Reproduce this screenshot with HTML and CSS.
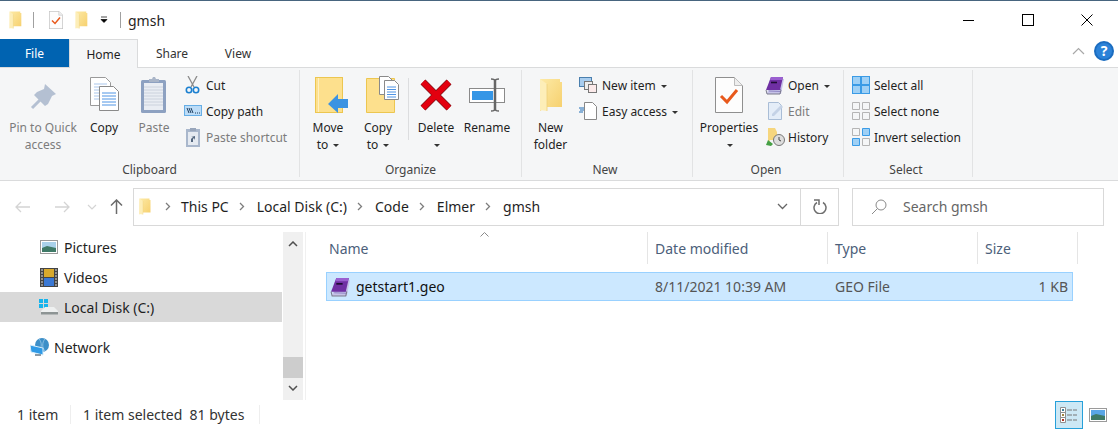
FILE: index.html
```html
<!DOCTYPE html>
<html lang="en">
<head>
  <meta charset="UTF-8" />
  <title>gmsh</title>
  <link rel="stylesheet" href="styles.css">
</head>
<body>
  <svg class="defs" width="0" height="0">
    <defs>
      <linearGradient id="folder-fill" x1="0" y1="0" x2="1" y2="1">
        <stop offset="0" stop-color="#fdeaa6"/>
        <stop offset="1" stop-color="#f6cf6c"/>
      </linearGradient>
      <symbol id="folder" viewBox="0 0 24 34">
        <path d="M1 1h20v3h2v25H8L1 33z" fill="url(#folder-fill)"/>
        <path d="M1 1l7 5v27l-7-1z" fill="#fdeeb8"/>
        <path d="M8 6v27" stroke="#efcf78" stroke-width=".8"/>
      </symbol>
      <symbol id="notepad" viewBox="0 0 20 19">
        <path d="M5 3h14l-3 15H2z" fill="#c6c2e8"/>
        <path d="M4 13l12 .5M4 15l12 .5" stroke="#8f86c4"/>
        <path d="M6 1h12l-3 13H1z" fill="#6f2fa3"/>
        <path d="M6 1h12l-1 3H5z" fill="#9a5fd0"/>
        <path d="M6 6.500h6" stroke="#1d0b33" stroke-width="1.600"/>
        <path d="M1 14l1 4h13l1-4" fill="none" stroke="#7a7a8c"/>
      </symbol>
      <symbol id="check-doc" viewBox="0 0 28 36">
        <path d="M.5.5h19l8 8v27H.5z" fill="#fdfdfd" stroke="#8f8f8f"/>
        <path d="M19.500.5v8h8" fill="#eee" stroke="#bdbdbd"/>
        <path d="M6 19l6 6 10-12" fill="none" stroke="#e8591c" stroke-width="3"/>
      </symbol>
    </defs>
  </svg>

  <div class="top-line"></div>

  <header class="titlebar">
    <svg class="qa-folder" width="13" height="18"><use href="#folder"/></svg>
    <span class="qa-sep"></span>
    <svg class="qa-props" width="14" height="18"><use href="#check-doc"/></svg>
    <svg class="qa-folder2" width="13" height="18"><use href="#folder"/></svg>
    <svg class="qa-drop" width="8" height="8"><path d="M1 1h6M1 3.500h6l-3 3z" fill="#000" stroke="#000" stroke-width=".7"/></svg>
    <span class="qa-sep qa-sep2"></span>
    <span class="title-text">gmsh</span>
    <div class="win-buttons">
      <svg width="12" height="12"><path d="M0 6.500h11" stroke="#000"/></svg>
      <svg width="12" height="12"><rect x=".5" y=".5" width="11" height="11" fill="none" stroke="#000"/></svg>
      <svg width="12" height="12"><path d="M.5.500l11 11M11.500.500l-11 11" stroke="#000"/></svg>
    </div>
  </header>

  <nav class="tabs">
    <span class="tab tab-file">File</span>
    <span class="tab tab-home">Home</span>
    <span class="tab tab-share">Share</span>
    <span class="tab tab-view">View</span>
    <div class="tabs-right">
      <svg width="13" height="8"><path d="M1 7l5.500-5.500L12 7" fill="none" stroke="#a8a8a8" stroke-width="1.200"/></svg>
      <svg width="20" height="20"><circle cx="10" cy="10" r="10" fill="#1a6cc0"/><circle cx="10" cy="10" r="8" fill="#2b82d8"/><text x="10" y="15" class="help-mark">?</text></svg>
    </div>
  </nav>

  <section class="ribbon">
    <div class="group group-clipboard">
      <div class="group-body">
        <div class="large w-pin disabled">
          <svg class="big-icon" width="32" height="38" viewBox="0 0 32 38"><path d="M5 32l9-9" stroke="#b4c0d2" stroke-width="3"/><path d="M18 8l11 10-4 2-4 8-3 2-11-11 3-3 7-3z" fill="#b4c0d2"/></svg>
          <span>Pin to Quick<br>access</span>
        </div>
        <div class="large w-copy">
          <svg class="big-icon" width="32" height="38" viewBox="0 0 32 38">
            <path d="M2.500 1.500h15l5 5v23h-20z" fill="#fff" stroke="#9a9a9a"/>
            <path d="M6 8h13M6 11h13M6 14h13M6 17h13M6 20h13M6 23h13" stroke="#a9c6ec"/>
            <path d="M11.500 10.500h14l5 5v19h-19z" fill="#fff" stroke="#8a8a8a"/>
            <path d="M14 17h14M14 20h14M14 23h14M14 26h14M14 29h14" stroke="#4f94e4"/>
          </svg>
          <span>Copy</span>
        </div>
        <div class="large w-paste disabled">
          <svg class="big-icon" width="30" height="38" viewBox="0 0 30 38">
            <rect x="2" y="4" width="25" height="33" rx="1.500" fill="#8da1c1"/>
            <rect x="5" y="7" width="19" height="27" fill="#e9edf3"/>
            <path d="M5 11h19M5 14h19M5 17h19M5 20h19M5 23h19M5 26h19M5 29h19" stroke="#cbd2dd"/>
            <path d="M10 6V3h3l1-2h2l1 2h3v3z" fill="#a9b5c8"/>
          </svg>
          <span>Paste</span>
        </div>
        <div class="small-col col-clipboard">
          <div class="small">
            <svg width="18" height="18"><path d="M4 0l6 11M13 0L7 11" stroke="#8b8b8b" stroke-width="1.300"/><circle cx="5" cy="14" r="2.700" fill="none" stroke="#1c80d0" stroke-width="1.600"/><circle cx="12" cy="14" r="2.700" fill="none" stroke="#1c80d0" stroke-width="1.600"/></svg>
            <span>Cut</span>
          </div>
          <div class="small">
            <svg width="18" height="12"><rect x=".5" y=".5" width="17" height="10" fill="#bcdcf7" stroke="#66aee6"/><path d="M3 3l2 5M5 3l2 5M7 3l2 5" stroke="#1d3c5c"/><path d="M11 8h1M13 8h1M15 8h1" stroke="#1d3c5c"/></svg>
            <span>Copy path</span>
          </div>
          <div class="small disabled">
            <svg width="18" height="20"><rect x="2" y="2" width="14" height="18" fill="#a9b7cc"/><rect x="4" y="5" width="10" height="13" fill="#e5eaf1"/><path d="M6 1h6v3H6z" fill="#99a6bb"/><path d="M7 15v-3l2-2h-2l4-1v4l-1-2-1 1v3z" fill="#54677f"/></svg>
            <span>Paste shortcut</span>
          </div>
        </div>
      </div>
      <div class="group-label">Clipboard</div>
    </div>

    <div class="group group-organize">
      <div class="group-body">
        <div class="large w-move">
          <svg class="big-icon shift-move" width="34" height="38" viewBox="0 0 34 38">
            <rect x=".5" y="1.500" width="27" height="35" fill="#fde08d" stroke="#ecc650"/>
            <path d="M3.500 2v34" stroke="#fff0c0"/>
            <path d="M13 28l10-10v5h10v9H23v5z" fill="#3c93e2"/>
          </svg>
          <span>Move<br>to <i class="caret"></i></span>
        </div>
        <div class="large w-copyto">
          <svg class="big-icon shift-copy" width="34" height="38" viewBox="0 0 34 38">
            <path d="M.5 2.500h28v34H.5z" fill="#fde08d" stroke="#ecc650"/>
            <path d="M13.500.5h9l4 4v14h-13z" fill="#fff" stroke="#8a8a8a"/>
            <path d="M18.500 4.500h10l4 4v15h-14z" fill="#fff" stroke="#8a8a8a"/>
            <path d="M21 11h9M21 13.500h9M21 16h9M21 18.500h9M21 21h9" stroke="#4f94e4"/>
          </svg>
          <span>Copy<br>to <i class="caret"></i></span>
        </div>
        <span class="inner-sep"></span>
        <div class="large w-delete">
          <svg class="big-icon" width="34" height="38" viewBox="0 0 34 38"><path d="M4 6l26 26M30 6L4 32" stroke="#7f1218" stroke-width="7"/><path d="M4 6l26 26M30 6L4 32" stroke="#e3000f" stroke-width="5.500"/></svg>
          <span>Delete<br><i class="caret"></i></span>
        </div>
        <div class="large w-rename">
          <svg class="big-icon" width="38" height="38" viewBox="0 0 38 38">
            <rect x="1.500" y="12.500" width="35" height="14" fill="#fff" stroke="#8a8a8a"/>
            <rect x="4" y="15" width="21" height="9" fill="#3596e6"/>
            <path d="M27 4v30" stroke="#666" stroke-width="2.500"/>
            <path d="M23 3c2 0 4 0 4 2 0-2 2-2 4-2M23 35c2 0 4 0 4-2 0 2 2 2 4 2" fill="none" stroke="#666" stroke-width="1.500"/>
          </svg>
          <span>Rename</span>
        </div>
      </div>
      <div class="group-label">Organize</div>
    </div>

    <div class="group group-new">
      <div class="group-body">
        <div class="large w-folder">
          <svg class="big-icon" width="24" height="36"><use href="#folder"/></svg>
          <span>New<br>folder</span>
        </div>
        <div class="small-col col-new">
          <div class="small">
            <svg width="18" height="16"><rect x=".5" y=".5" width="12" height="9" fill="#a8cdef" stroke="#4a7fae"/><rect x="5.500" y="4.500" width="8" height="8" fill="#eee" stroke="#777"/><rect x="9.500" y="7.500" width="8" height="8" fill="#fbeaea" stroke="#777"/></svg>
            <span>New item <i class="caret"></i></span>
          </div>
          <div class="small">
            <svg width="18" height="18"><path d="M5.500.5h8l4 4v13h-12z" fill="#fff" stroke="#888"/><path d="M0 6h5M1 8h4M0 10h4" stroke="#1f6db5"/></svg>
            <span>Easy access <i class="caret"></i></span>
          </div>
        </div>
      </div>
      <div class="group-label label-shift">New</div>
    </div>

    <div class="group group-open">
      <div class="group-body">
        <div class="large w-props">
          <svg class="big-icon" width="28" height="36"><use href="#check-doc"/></svg>
          <span>Properties<br><i class="caret"></i></span>
        </div>
        <div class="small-col col-open">
          <div class="small">
            <svg width="20" height="19"><use href="#notepad"/></svg>
            <span>Open <i class="caret"></i></span>
          </div>
          <div class="small disabled">
            <svg width="20" height="19"><path d="M3.500.5h10l3 3v14h-13z" fill="#e4edf8" stroke="#a9bdd6"/><path d="M7 12l9-9 2 2-9 9H7z" fill="#c4d2e6"/></svg>
            <span>Edit</span>
          </div>
          <div class="small">
            <svg width="20" height="20"><path d="M3 1h7l2 4v8H5l-2 5z" fill="#f6d67e"/><circle cx="14" cy="13" r="5.500" fill="#ddd" stroke="#777"/><path d="M14 10v3l2 1" stroke="#444" fill="none"/><path d="M3 13l5 4-2 2-5-1z" fill="#46a046"/></svg>
            <span>History</span>
          </div>
        </div>
      </div>
      <div class="group-label label-shift">Open</div>
    </div>

    <div class="group group-select">
      <div class="group-body">
        <div class="small-col col-select">
          <div class="small">
            <svg width="18" height="18"><rect x=".5" y=".5" width="17" height="17" fill="#9fd0f5" stroke="#3a9be6"/><path d="M9 0v18M0 9h18" stroke="#3a9be6" stroke-width="2"/></svg>
            <span>Select all</span>
          </div>
          <div class="small">
            <svg width="18" height="18"><path d="M.5.500h7v7h-7zM10.500.500h7v7h-7zM.5 10.500h7v7h-7zM10.500 10.500h7v7h-7z" fill="none" stroke="#b5b5b5"/></svg>
            <span>Select none</span>
          </div>
          <div class="small">
            <svg width="18" height="18"><path d="M10.500.500h7v7h-7zM.5 10.500h7v7h-7z" fill="#9fd0f5" stroke="#3a9be6"/><path d="M.5.500h7v7h-7zM10.500 10.500h7v7h-7z" fill="none" stroke="#b5b5b5"/></svg>
            <span>Invert selection</span>
          </div>
        </div>
      </div>
      <div class="group-label label-shift">Select</div>
    </div>
  </section>

  <section class="address-row">
    <div class="nav-arrows">
      <svg width="16" height="12"><path d="M15 6H1M6 1L1 6l5 5" fill="none" stroke="#d4d4d4" stroke-width="1.300"/></svg>
      <svg class="nav-fwd" width="16" height="12"><path d="M1 6h14M10 1l5 5-5 5" fill="none" stroke="#d4d4d4" stroke-width="1.300"/></svg>
      <svg class="nav-down" width="10" height="6"><path d="M1 1l4 4 4-4" fill="none" stroke="#d4d4d4" stroke-width="1.200"/></svg>
      <svg class="nav-up" width="13" height="15"><path d="M6.500 15V1M1 6.500l5.500-5.500 5.500 5.500" fill="none" stroke="#6b6b6b" stroke-width="1.500"/></svg>
    </div>
    <div class="address-box">
      <svg class="crumb-folder" width="12" height="17"><use href="#folder"/></svg>
      <svg class="crumb-arrow" width="6" height="9"><path d="M1 1l3.500 3.500L1 8" fill="none" stroke="#7d7d7d" stroke-width="1.300"/></svg>
      <span class="crumb">This PC</span>
      <svg class="crumb-arrow" width="6" height="9"><path d="M1 1l3.500 3.500L1 8" fill="none" stroke="#7d7d7d" stroke-width="1.300"/></svg>
      <span class="crumb">Local Disk (C:)</span>
      <svg class="crumb-arrow" width="6" height="9"><path d="M1 1l3.500 3.500L1 8" fill="none" stroke="#7d7d7d" stroke-width="1.300"/></svg>
      <span class="crumb">Code</span>
      <svg class="crumb-arrow" width="6" height="9"><path d="M1 1l3.500 3.500L1 8" fill="none" stroke="#7d7d7d" stroke-width="1.300"/></svg>
      <span class="crumb">Elmer</span>
      <svg class="crumb-arrow" width="6" height="9"><path d="M1 1l3.500 3.500L1 8" fill="none" stroke="#7d7d7d" stroke-width="1.300"/></svg>
      <span class="crumb">gmsh</span>
      <div class="address-end">
        <svg width="11" height="7"><path d="M1 1l4.500 4.500L10 1" fill="none" stroke="#666" stroke-width="1.300"/></svg>
        <span class="refresh">
          <svg width="14" height="15"><path d="M4 3.500a6 6 0 1 0 6 0" fill="none" stroke="#6e6e6e" stroke-width="1.500"/><path d="M1 1h5v5" fill="none" stroke="#6e6e6e" stroke-width="1.500"/></svg>
        </span>
      </div>
    </div>
    <div class="search-box">
      <svg width="16" height="16"><circle cx="10" cy="6" r="5" fill="none" stroke="#8a8a8a"/><path d="M6.500 9.500L1 15" stroke="#8a8a8a"/></svg>
      <span>Search gmsh</span>
    </div>
  </section>

  <main class="content">
    <aside class="nav-pane">
      <div class="tree-item">
        <svg width="18" height="14"><rect x=".5" y=".5" width="17" height="13" fill="#fff" stroke="#9a9a9a"/><rect x="2" y="2" width="14" height="10" fill="#a9d1ea"/><path d="M2 8l5-2 9 2v4H2z" fill="#3f7a67"/></svg>
        <span>Pictures</span>
      </div>
      <div class="tree-item">
        <svg width="18" height="19"><rect width="18" height="19" fill="#444"/><rect x="4" y="1" width="10" height="8" fill="#d8a92c"/><rect x="4" y="10" width="10" height="8" fill="#3a78d4"/><path d="M1 2h2M1 5h2M1 8h2M1 11h2M1 14h2M1 17h2M15 2h2M15 5h2M15 8h2M15 11h2M15 14h2M15 17h2" stroke="#ddd"/></svg>
        <span>Videos</span>
      </div>
      <div class="tree-item tree-selected">
        <svg width="20" height="16"><path d="M0 0h4v4H0zM5 0h4v4H5zM0 5h4v4H0zM5 5h4v4H5z" fill="#17b4ec"/><path d="M2 12l4-4h9l4 4v3H2z" fill="#eef0f0"/><path d="M2 13h17v2.500H2z" fill="#8d9494"/></svg>
        <span>Local Disk (C:)</span>
      </div>
      <div class="tree-item tree-root">
        <svg width="19" height="18"><circle cx="12" cy="7" r="7" fill="#3d8fc8"/><path d="M9 1c3 3 3 9 0 12M15 1c-3 3-3 9 0 12" fill="none" stroke="#a9d3ee" stroke-width=".7"/><path d="M0 7l13 3v7L1 14z" fill="#2f9ae6" stroke="#d9eefb"/><path d="M5 17h6" stroke="#8a9aa6" stroke-width="2"/></svg>
        <span>Network</span>
      </div>
    </aside>

    <div class="scrollbar">
      <svg width="10" height="6"><path d="M1 5l4-4 4 4" fill="none" stroke="#505050" stroke-width="1.500"/></svg>
      <span class="thumb"></span>
      <svg width="10" height="6"><path d="M1 1l4 4 4-4" fill="none" stroke="#505050" stroke-width="1.500"/></svg>
    </div>

    <div class="file-pane">
      <svg class="sort-mark" width="9" height="5"><path d="M.5 4.500L4.500.5l4 4" fill="none" stroke="#8a8a8a"/></svg>
      <div class="columns">
        <span>Name</span>
        <span>Date modified</span>
        <span>Type</span>
        <span>Size</span>
      </div>
      <div class="file-row">
        <span class="file-name"><svg width="21" height="20"><use href="#notepad"/></svg>getstart1.geo</span>
        <span class="cell">8/11/2021 10:39 AM</span>
        <span class="cell">GEO File</span>
        <span class="cell cell-size">1 KB</span>
      </div>
    </div>
  </main>

  <footer class="statusbar">
    <span class="status-one">1 item</span>
    <span class="status-two">1 item selected&nbsp; 81 bytes</span>
    <div class="view-buttons">
      <span class="view-details">
        <svg width="18" height="18"><path d="M.5 1.500h5v5h-5zM.5 6.500h5v5h-5zM.5 11.500h5v5h-5z" fill="#fff" stroke="#8f8f8f"/><rect x="2" y="3" width="2" height="2" fill="#3d7f9a"/><rect x="2" y="8" width="2" height="2" fill="#a08440"/><rect x="2" y="13" width="2" height="2" fill="#b03020"/><path d="M7 4h5M13 4h4M7 9h5M13 9h4M7 14h5M13 14h4" stroke="#777"/></svg>
      </span>
      <svg width="18" height="14"><rect x=".5" y=".5" width="17" height="13" fill="#fff" stroke="#9a9a9a"/><rect x="2" y="2" width="14" height="10" fill="#5aa6e6"/><path d="M2 8l5-2 9 2v4H2z" fill="#3f7a67"/></svg>
    </div>
  </footer>
</body>
</html>
```

FILE: styles.css
```css
* {
  box-sizing: border-box;
}
html, body {
  margin: 0;
  height: 429px;
  overflow: hidden;
}
body {
  display: flex;
  flex-direction: column;
  font-family: "Noto Sans", "Open Sans", sans-serif;
  font-size: 12px;
  color: #1f1f1f;
  background: #fff;
}
svg {
  display: block;
  flex: none;
}
.defs {
  position: absolute;
}
.top-line {
  height: 1px;
  background: #47657f;
}

/* title bar */
.titlebar {
  height: 38px;
  display: flex;
  align-items: center;
  padding-left: 9px;
}
.qa-sep {
  width: 1px;
  height: 16px;
  margin-left: 11px;
  background: #a0a0a0;
}
.qa-props {
  margin-left: 15px;
}
.qa-folder2 {
  margin-left: 12px;
}
.qa-drop {
  margin-left: 12px;
}
.qa-sep2 {
  margin-left: 12px;
}
.title-text {
  margin-left: 7px;
  font-size: 14px;
}
.win-buttons {
  margin-left: auto;
  display: flex;
  align-items: center;
  gap: 47px;
  padding-right: 25px;
}

/* tabs */
.tabs {
  height: 29px;
  display: flex;
  position: relative;
  z-index: 1;
}
.tab {
  display: flex;
  align-items: center;
  justify-content: center;
  font-size: 12px;
  color: #333;
}
.tab-file {
  width: 69px;
  height: 28px;
  background: #0063b1;
  color: #fff;
}
.tab-home {
  width: 69px;
  background: #f5f6f7;
  border: 1px solid #dadbdc;
  border-bottom: none;
  color: #1f1f1f;
}
.tab-share {
  width: 68px;
}
.tab-view {
  width: 64px;
}
.tabs-right {
  margin-left: auto;
  display: flex;
  align-items: center;
  gap: 9px;
  padding: 0 4px 5px 0;
}
.help-mark {
  fill: #fff;
  font-size: 14px;
  font-weight: 700;
  text-anchor: middle;
}

/* ribbon */
.ribbon {
  height: 114px;
  margin-top: -1px;
  display: flex;
  padding: 2px 0 3px;
  background: #f5f6f7;
  border-top: 1px solid #dadbdc;
  border-bottom: 1px solid #dadbdc;
}
.group {
  display: flex;
  flex-direction: column;
  border-right: 1px solid #e2e3e4;
}
.group-clipboard {
  width: 300px;
}
.group-clipboard .group-body {
  padding-left: 4px;
}
.group-organize {
  width: 222px;
}
.group-organize .group-body {
  padding-left: 5px;
}
.group-new {
  width: 171px;
}
.group-new .group-body {
  padding-left: 4px;
}
.group-open {
  width: 151px;
}
.group-open .group-body {
  padding-left: 3px;
}
.group-select {
  width: 129px;
}
.group-select .group-body {
  padding-left: 8px;
}
.group-body {
  flex: 1;
  display: flex;
}
.group-label {
  height: 18px;
  text-align: center;
  line-height: 22px;
  color: #444;
}
.label-shift {
  padding-right: 4px;
}
.large {
  display: flex;
  flex-direction: column;
  align-items: center;
  text-align: center;
  line-height: 17px;
  white-space: nowrap;
}
.big-icon {
  height: 38px;
  margin: 6px 0 5px;
}
.shift-move {
  margin-left: 8px;
}
.shift-copy {
  margin-left: 10px;
}
.disabled {
  color: #7c7c7c;
}
.w-pin { width: 78px; }
.w-copy { width: 44px; }
.w-paste { width: 48px; margin-left: 4px; }
.w-move { width: 46px; }
.w-copyto { width: 54px; }
.w-delete { width: 48px; margin-left: 3px; }
.w-rename { width: 48px; margin-left: 3px; }
.w-folder { width: 49px; }
.w-props { width: 66px; }
.inner-sep {
  width: 1px;
  height: 62px;
  margin: 8px 0 0 3px;
  background: #dcdddf;
}
.caret {
  display: inline-block;
  width: 0;
  height: 0;
  margin-left: 2px;
  vertical-align: middle;
  border: 3px solid transparent;
  border-top: 3px solid #333;
  border-bottom: none;
}
.small-col {
  display: flex;
  flex-direction: column;
  padding-top: 2px;
}
.col-clipboard { margin-left: 6px; }
.col-new { margin-left: 4px; }
.col-open { margin-left: 3px; }
.small {
  height: 26px;
  display: flex;
  align-items: center;
  gap: 4px;
  white-space: nowrap;
}
.small svg {
  width: 18px;
}
.col-new .small {
  gap: 5px;
}
.col-open .small {
  gap: 3px;
}
.col-open .small svg {
  width: 20px;
}

/* address row */
.address-row {
  height: 51px;
  display: flex;
  align-items: center;
  padding: 0 14px 0 15px;
  font-size: 14px;
}
.nav-arrows {
  width: 118px;
  display: flex;
  align-items: center;
}
.nav-fwd { margin-left: 23px; }
.nav-down { margin-left: 17px; }
.nav-up { margin-left: 13px; }
.address-box {
  width: 706px;
  height: 38px;
  display: flex;
  align-items: center;
  padding-left: 5px;
  border: 1px solid #d9d9d9;
}
.crumb-arrow {
  margin: 0 12px 0 10px;
}
.crumb-folder + .crumb-arrow {
  margin: 0 10px 0 14px;
}
.address-end {
  margin-left: auto;
  display: flex;
  align-items: center;
  height: 100%;
}
.refresh {
  width: 38px;
  height: 100%;
  margin-left: 12px;
  display: flex;
  align-items: center;
  justify-content: center;
  border-left: 1px solid #d9d9d9;
}
.search-box {
  width: 252px;
  height: 38px;
  margin-left: 13px;
  display: flex;
  align-items: center;
  gap: 16px;
  padding-left: 18px;
  border: 1px solid #d9d9d9;
  color: #666;
}

/* main area */
.content {
  flex: 1;
  display: flex;
  min-height: 0;
  font-size: 14px;
}
.nav-pane {
  width: 283px;
}
.tree-item {
  height: 30px;
  display: flex;
  align-items: center;
  gap: 6px;
  padding-left: 40px;
}
.tree-selected {
  width: 282px;
  background: #d9d9d9;
  gap: 5px;
  padding-left: 39px;
}
.tree-root {
  margin-top: 10px;
  padding-left: 30px;
  gap: 5px;
}
.scrollbar {
  width: 20px;
  display: flex;
  flex-direction: column;
  align-items: center;
  padding: 9px 0;
  background: #f0f0f0;
}
.thumb {
  width: 100%;
  height: 21px;
  margin: auto 0 7px;
  background: #cdcdcd;
}
.file-pane {
  flex: 1;
  position: relative;
  margin-left: 2px;
  padding-left: 20px;
  border-left: 1px solid #f0f0f0;
}
.sort-mark {
  position: absolute;
  left: 174px;
  top: 0;
}
.columns {
  height: 32px;
  width: 752px;
  display: grid;
  grid-template-columns: 322px 180px 150px 100px;
  align-items: center;
  color: #4c607a;
}
.columns span {
  height: 100%;
  display: flex;
  align-items: center;
  padding-left: 7px;
  border-right: 1px solid #e5e5e5;
}
.columns span:first-child {
  padding-left: 3px;
}
.file-row {
  width: 747px;
  height: 29px;
  margin-top: 8px;
  display: grid;
  grid-template-columns: 322px 180px 149px 94px;
  align-items: center;
  background: #cce8ff;
  border: 1px solid #99d1ff;
}
.file-name {
  display: flex;
  align-items: center;
  gap: 5px;
  padding-left: 3px;
  color: #111;
}
.cell {
  padding-left: 6px;
  color: #555;
}
.cell-size {
  padding-right: 4px;
  text-align: right;
}

/* status bar */
.statusbar {
  height: 29px;
  display: flex;
  align-items: center;
  font-size: 14px;
  color: #333;
}
.status-one {
  width: 71px;
  padding-left: 17px;
  border-right: 1px solid #eee;
}
.status-two {
  width: 189px;
  padding-left: 12px;
  border-right: 1px solid #eee;
}
.view-buttons {
  margin-left: auto;
  display: flex;
  align-items: center;
  gap: 6px;
  padding-right: 11px;
}
.view-details {
  width: 28px;
  height: 28px;
  display: flex;
  align-items: center;
  justify-content: center;
  background: #cce8f5;
  border: 1px solid #26a0da;
}
```
